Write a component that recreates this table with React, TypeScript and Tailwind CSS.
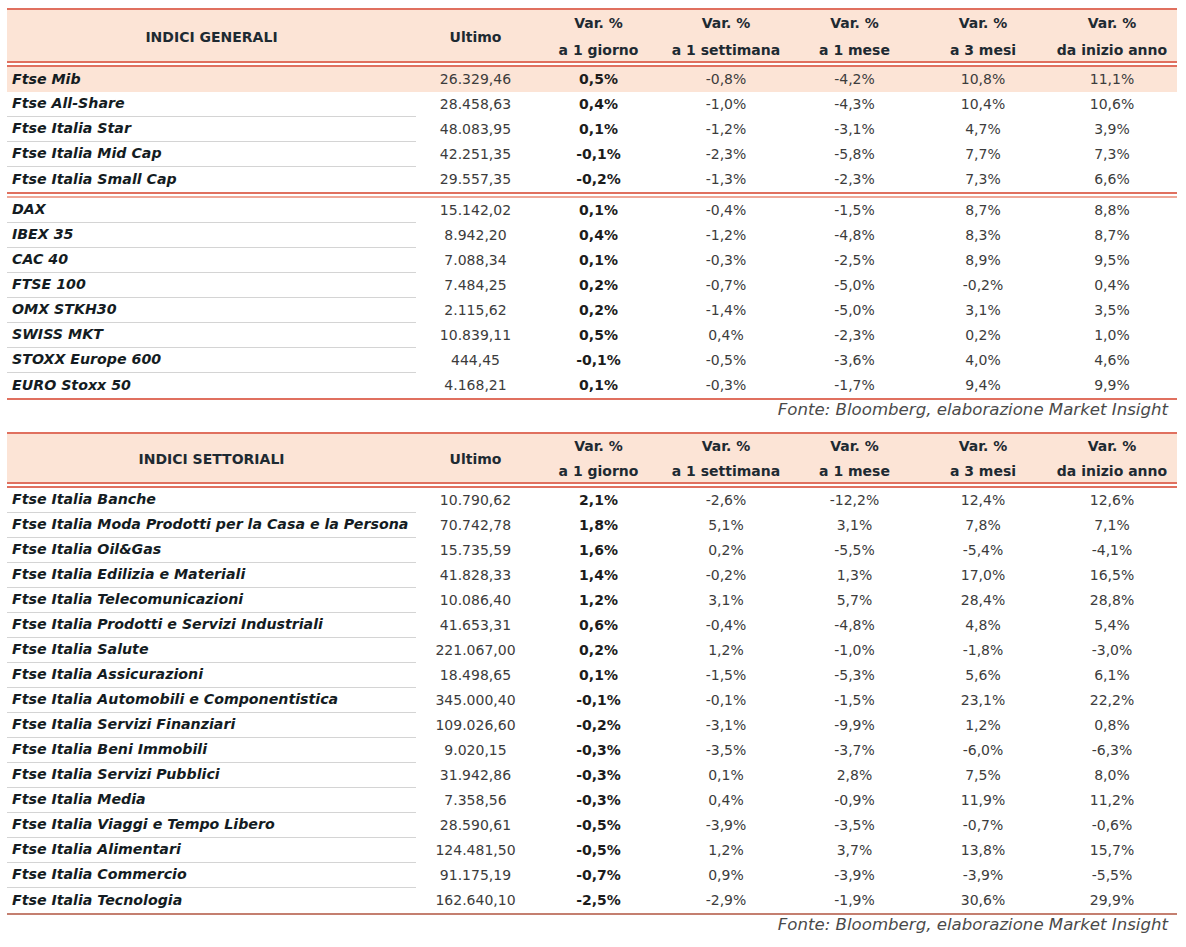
type Row = [string, string, string, string, string, string, string]

const generaliItalia: Row[] = [
  ['Ftse Mib', '26.329,46', '0,5%', '-0,8%', '-4,2%', '10,8%', '11,1%'],
  ['Ftse All-Share', '28.458,63', '0,4%', '-1,0%', '-4,3%', '10,4%', '10,6%'],
  ['Ftse Italia Star', '48.083,95', '0,1%', '-1,2%', '-3,1%', '4,7%', '3,9%'],
  ['Ftse Italia Mid Cap', '42.251,35', '-0,1%', '-2,3%', '-5,8%', '7,7%', '7,3%'],
  ['Ftse Italia Small Cap', '29.557,35', '-0,2%', '-1,3%', '-2,3%', '7,3%', '6,6%'],
]

const generaliEsteri: Row[] = [
  ['DAX', '15.142,02', '0,1%', '-0,4%', '-1,5%', '8,7%', '8,8%'],
  ['IBEX 35', '8.942,20', '0,4%', '-1,2%', '-4,8%', '8,3%', '8,7%'],
  ['CAC 40', '7.088,34', '0,1%', '-0,3%', '-2,5%', '8,9%', '9,5%'],
  ['FTSE 100', '7.484,25', '0,2%', '-0,7%', '-5,0%', '-0,2%', '0,4%'],
  ['OMX STKH30', '2.115,62', '0,2%', '-1,4%', '-5,0%', '3,1%', '3,5%'],
  ['SWISS MKT', '10.839,11', '0,5%', '0,4%', '-2,3%', '0,2%', '1,0%'],
  ['STOXX Europe 600', '444,45', '-0,1%', '-0,5%', '-3,6%', '4,0%', '4,6%'],
  ['EURO Stoxx 50', '4.168,21', '0,1%', '-0,3%', '-1,7%', '9,4%', '9,9%'],
]

const settoriali: Row[] = [
  ['Ftse Italia Banche', '10.790,62', '2,1%', '-2,6%', '-12,2%', '12,4%', '12,6%'],
  ['Ftse Italia Moda Prodotti per la Casa e la Persona', '70.742,78', '1,8%', '5,1%', '3,1%', '7,8%', '7,1%'],
  ['Ftse Italia Oil&Gas', '15.735,59', '1,6%', '0,2%', '-5,5%', '-5,4%', '-4,1%'],
  ['Ftse Italia Edilizia e Materiali', '41.828,33', '1,4%', '-0,2%', '1,3%', '17,0%', '16,5%'],
  ['Ftse Italia Telecomunicazioni', '10.086,40', '1,2%', '3,1%', '5,7%', '28,4%', '28,8%'],
  ['Ftse Italia Prodotti e Servizi Industriali', '41.653,31', '0,6%', '-0,4%', '-4,8%', '4,8%', '5,4%'],
  ['Ftse Italia Salute', '221.067,00', '0,2%', '1,2%', '-1,0%', '-1,8%', '-3,0%'],
  ['Ftse Italia Assicurazioni', '18.498,65', '0,1%', '-1,5%', '-5,3%', '5,6%', '6,1%'],
  ['Ftse Italia Automobili e Componentistica', '345.000,40', '-0,1%', '-0,1%', '-1,5%', '23,1%', '22,2%'],
  ['Ftse Italia Servizi Finanziari', '109.026,60', '-0,2%', '-3,1%', '-9,9%', '1,2%', '0,8%'],
  ['Ftse Italia Beni Immobili', '9.020,15', '-0,3%', '-3,5%', '-3,7%', '-6,0%', '-6,3%'],
  ['Ftse Italia Servizi Pubblici', '31.942,86', '-0,3%', '0,1%', '2,8%', '7,5%', '8,0%'],
  ['Ftse Italia Media', '7.358,56', '-0,3%', '0,4%', '-0,9%', '11,9%', '11,2%'],
  ['Ftse Italia Viaggi e Tempo Libero', '28.590,61', '-0,5%', '-3,9%', '-3,5%', '-0,7%', '-0,6%'],
  ['Ftse Italia Alimentari', '124.481,50', '-0,5%', '1,2%', '3,7%', '13,8%', '15,7%'],
  ['Ftse Italia Commercio', '91.175,19', '-0,7%', '0,9%', '-3,9%', '-3,9%', '-5,5%'],
  ['Ftse Italia Tecnologia', '162.640,10', '-2,5%', '-2,9%', '-1,9%', '30,6%', '29,9%'],
]

const cols = 'grid grid-cols-[409px_119px_127px_128px_129px_128px_130px]'
const font = "font-['Century_Gothic','DejaVu_Sans',sans-serif]"

function DataRow({ row, highlight, last }: { row: Row; highlight?: boolean; last?: boolean }) {
  const [name, ultimo, giorno, ...rest] = row
  return (
    <div className={`${cols} h-[25px] text-[14px] ${highlight ? 'bg-[#fce4d6]' : ''}`}>
      <div
        className={`flex items-center pl-[5px] text-[14.2px] font-bold italic text-[#141c22] whitespace-nowrap ${
          last || highlight ? '' : 'border-b border-[#d4d4d4]'
        }`}
      >
        {name}
      </div>
      <div className="flex items-center justify-center text-[#3c3c3c]">{ultimo}</div>
      <div className="flex items-center justify-center font-bold text-[#1c1c1c]">{giorno}</div>
      {rest.map((v, i) => (
        <div key={i} className="flex items-center justify-center text-[#3c3c3c]">
          {v}
        </div>
      ))}
    </div>
  )
}

function Header({ title, tall }: { title: string; tall?: boolean }) {
  const labels = ['a 1 giorno', 'a 1 settimana', 'a 1 mese', 'a 3 mesi', 'da inizio anno']
  const lh = tall ? 'leading-[27px]' : 'leading-[25px]'
  return (
    <>
      <div className="h-[2px] bg-[#e0705f]" />
      <div className={`${cols} ${tall ? 'h-[51px]' : 'h-[48px]'} bg-[#fce4d6] text-[14px] font-bold text-[#1e2a32]`}>
        <div className="flex items-center justify-center">{title}</div>
        <div className="flex items-center justify-center">Ultimo</div>
        {labels.map((l) => (
          <div key={l} className={`flex flex-col items-center justify-center ${lh}`}>
            <span>Var. %</span>
            <span>{l}</span>
          </div>
        ))}
      </div>
      <div className="h-[2px] bg-[#e0705f]" />
      <div className="h-[2px] bg-white" />
      <div className="h-[2px] bg-[#e0705f]" />
    </>
  )
}

function Fonte() {
  return (
    <div className="flex justify-end pr-[9px] text-[16.6px] italic leading-[20px] text-[#4a4a4a]">
      Fonte: Bloomberg, elaborazione Market Insight
    </div>
  )
}

export default function App() {
  return (
    <div className={`min-h-[947px] w-[1186px] bg-white pt-[8px] px-[7px] ${font}`}>
      <div className="w-[1170px]">
        <Header title="INDICI GENERALI" tall />
        {generaliItalia.map((r, i) => (
          <DataRow key={r[0]} row={r} highlight={i === 0} last={i === generaliItalia.length - 1} />
        ))}
        <div className="h-[2px] bg-[#e0705f]" />
        <div className="h-[2px] bg-white" />
        <div className="h-[2px] bg-[#efa898]" />
        {generaliEsteri.map((r, i) => (
          <DataRow key={r[0]} row={r} last={i === generaliEsteri.length - 1} />
        ))}
        <div className="h-[2px] bg-[#e0705f]" />
        <Fonte />
        <div className="h-[12px]" />
        <Header title="INDICI SETTORIALI" />
        {settoriali.map((r, i) => (
          <DataRow key={r[0]} row={r} last={i === settoriali.length - 1} />
        ))}
        <div className="h-[2px] bg-[#c47f70]" />
        <Fonte />
      </div>
    </div>
  )
}
